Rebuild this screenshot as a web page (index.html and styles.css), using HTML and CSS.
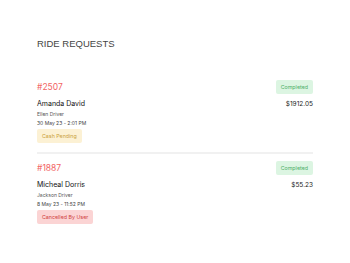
FILE: index.html
```
<!DOCTYPE html>
<html lang="en">
<head>
  <meta charset="UTF-8" />
  <meta name="viewport" content="width=device-width, initial-scale=1" />
  <title>Ride Requests</title>
  <link rel="stylesheet" href="styles.css">
</head>
<body>

  <div class="page">
    <h2 class="title">RIDE REQUESTS</h2>

    <div class="ride">
      <div class="row">
        <span class="ride-id">#2507</span>
        <span class="badge done">Completed</span>
      </div>
      <div class="row">
        <span class="rider">Amanda David</span>
        <span class="price">$1912.05</span>
      </div>
      <div class="driver">Ellen Driver</div>
      <div class="date">30 May 23 - 2:01 PM</div>
      <div class="badge pending">Cash Pending</div>
    </div>

    <div class="ride">
      <div class="row">
        <span class="ride-id">#1887</span>
        <span class="badge done">Completed</span>
      </div>
      <div class="row">
        <span class="rider">Micheal Dorris</span>
        <span class="price">$55.23</span>
      </div>
      <div class="driver">Jackson Driver</div>
      <div class="date">8 May 23 - 11:52 PM</div>
      <div class="badge cancelled">Cancelled By User</div>
    </div>
  </div>

</body>
</html>
```

FILE: styles.css
```
body {
  margin: 0;
  background: #fff;
  font-family: Inter, "Open Sans", sans-serif;
  color: #222;
}
.page {
  padding: 37px 37px 0;
}
.title {
  margin: 0 0 29px;
  font-family: "Liberation Sans", Arial, sans-serif;
  font-size: 9.5px;
  font-weight: normal;
  color: #444;
  line-height: 14px;
}
.ride {
  padding-bottom: 9px;
}
.ride + .ride {
  border-top: 2px solid #f1f1f1;
  padding-top: 7px;
}
.row {
  display: flex;
  justify-content: space-between;
  align-items: center;
}
.ride-id {
  color: #f26464;
  font-size: 8.5px;
  line-height: 13px;
}
.rider {
  margin-top: 5px;
  font-size: 7px;
  font-weight: 400;
  color: #111;
  line-height: 10px;
}
.price {
  margin-top: 5px;
  font-size: 6.5px;
  color: #222;
}
.driver {
  margin-top: 1px;
  font-size: 5px;
  color: #555;
  line-height: 8px;
}
.date {
  margin-top: 1px;
  font-size: 5px;
  color: #444;
  line-height: 8px;
}
.badge {
  display: block;
  width: max-content;
  padding: 0 5px;
  font-size: 5.3px;
  line-height: 14px;
  border-radius: 2px;
}
.ride > .badge {
  margin-top: 2px;
}
.done {
  background: #dcf5e2;
  color: #4caf67;
}
.pending {
  background: #fcf1d4;
  color: #c9a03a;
}
.cancelled {
  background: #fbd4d4;
  color: #d0403c;
}
```
